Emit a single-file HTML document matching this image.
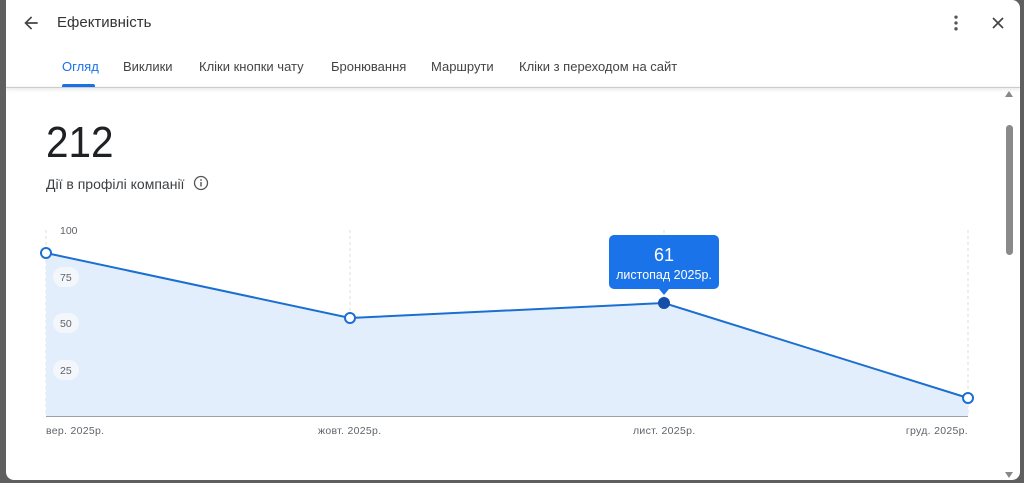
<!DOCTYPE html>
<html><head><meta charset="utf-8"><style>
body{margin:0;width:1024px;height:483px;overflow:hidden;background:#5f5f5f;font-family:"Liberation Sans",Roboto,sans-serif;position:relative}
.win{position:absolute;left:6px;top:0;width:1014px;height:480px;background:#fff;border-radius:0 8px 8px 8px;overflow:hidden}
.t{position:absolute;white-space:nowrap}
</style></head><body>
<div class="win">
<svg class="t" style="left:15px;top:13px" width="20" height="20" viewBox="0 0 24 24"><path d="M20 11H7.8l5.6-5.6L12 4l-8 8 8 8 1.4-1.4L7.8 13H20z" fill="#444"/></svg>
<div class="t" style="left:51px;top:14px;font-size:15px;color:#333">Ефективність</div>
<svg class="t" style="left:940px;top:13px" width="20" height="20" viewBox="0 0 24 24"><circle cx="12" cy="5" r="2" fill="#555"/><circle cx="12" cy="12" r="2" fill="#555"/><circle cx="12" cy="19" r="2" fill="#555"/></svg>
<svg class="t" style="left:982px;top:13px" width="20" height="20" viewBox="0 0 24 24"><path d="M6 6L18 18M18 6L6 18" stroke="#444" stroke-width="2"/></svg>
<div class="t" style="top:59px;font-size:13px;color:#444;left:0">
<span style="position:absolute;left:56px;color:#1a73e8">Огляд</span>
<span style="position:absolute;left:117px">Виклики</span>
<span style="position:absolute;left:193px">Кліки кнопки чату</span>
<span style="position:absolute;left:325px">Бронювання</span>
<span style="position:absolute;left:425px">Маршрути</span>
<span style="position:absolute;left:513px">Кліки з переходом на сайт</span>
</div>
<div class="t" style="left:56px;top:84px;width:33px;height:3px;background:#1a73e8;border-radius:2px 2px 0 0"></div>
<div class="t" style="left:0;top:87px;width:1014px;height:1px;background:#ccc;box-shadow:0 1px 3px rgba(0,0,0,.25)"></div>
<div class="t" style="left:40px;top:118px;font-size:44px;color:#202124;transform:scaleX(.92);transform-origin:left">212</div>
<div class="t" style="left:40px;top:176px;font-size:14px;color:#3c4043">Дії в профілі компанії</div>
<svg class="t" style="left:187px;top:175px" width="16" height="16" viewBox="0 0 16 16"><circle cx="8" cy="8" r="6.5" fill="none" stroke="#555" stroke-width="1.3"/><rect x="7.3" y="7" width="1.4" height="4.5" fill="#555"/><circle cx="8" cy="5" r=".9" fill="#555"/></svg>
<svg class="t" style="left:0;top:0" width="1014" height="480">
<g stroke="#ddd" stroke-dasharray="3,3"><line x1="40" y1="230" x2="40" y2="416"/><line x1="344" y1="230" x2="344" y2="416"/><line x1="658" y1="230" x2="658" y2="416"/><line x1="962" y1="230" x2="962" y2="416"/></g>
<polygon points="40,253 344,318 658,303 962,398 962,416 40,416" fill="#e3eefd"/>
<line x1="40" y1="416.5" x2="962" y2="416.5" stroke="#9aa0a6"/>
<polyline points="40,253 344,318 658,303 962,398" fill="none" stroke="#1a6fd1" stroke-width="2"/>
<circle cx="40" cy="253" r="5" fill="#fff" stroke="#1a6fd1" stroke-width="2"/>
<circle cx="344" cy="318" r="5" fill="#fff" stroke="#1a6fd1" stroke-width="2"/>
<circle cx="962" cy="398" r="5" fill="#fff" stroke="#1a6fd1" stroke-width="2"/>
<circle cx="658" cy="303" r="6" fill="#1550a8"/>
<g fill="#f3f6fb"><rect x="47" y="267" width="26" height="20" rx="10"/><rect x="47" y="313" width="26" height="20" rx="10"/><rect x="47" y="360" width="26" height="20" rx="10"/></g>
<g font-size="10.5" fill="#5f6368" font-family="Liberation Sans,sans-serif"><text x="54" y="234">100</text><text x="54" y="281">75</text><text x="54" y="327">50</text><text x="54" y="374">25</text></g>
<g font-size="10.5" fill="#5f6368" font-family="Liberation Sans,sans-serif" letter-spacing=".3"><text x="40" y="434">вер. 2025р.</text><text x="312" y="434">жовт. 2025р.</text><text x="627" y="434">лист. 2025р.</text><text x="962" y="434" text-anchor="end">груд. 2025р.</text></g>
<rect x="603" y="235" width="110" height="54" rx="5" fill="#1a73e8"/>
<polygon points="653,289 663,289 658,295" fill="#1a73e8"/>
<text x="658" y="261" font-size="18" fill="#fff" text-anchor="middle" font-family="Liberation Sans,sans-serif">61</text>
<text x="658" y="279" font-size="12.5" fill="#fff" text-anchor="middle" font-family="Liberation Sans,sans-serif">листопад 2025р.</text>
<polygon points="1003,91 999,97 1007,97" fill="#888"/>
<rect x="1000" y="125" width="7" height="130" rx="3.5" fill="#8a8a8a"/>
<polygon points="1003,478 999,472 1007,472" fill="#888"/>
</svg>
</div>
</body></html>
